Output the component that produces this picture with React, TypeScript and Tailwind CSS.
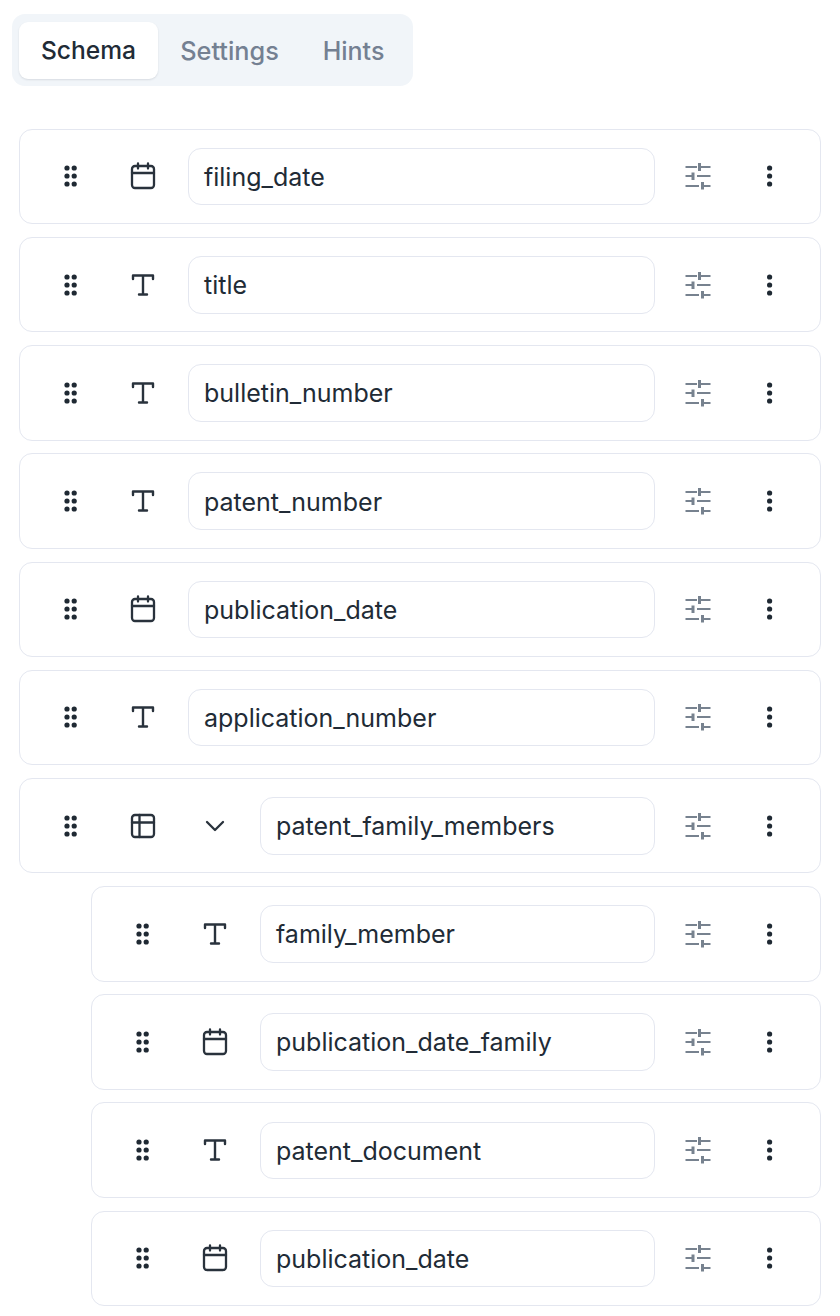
import React from "react"

type FieldType = "date" | "text" | "table"

type Field = {
  name: string
  type: FieldType
  nested?: boolean
  expandable?: boolean
}

const fields: Field[] = [
  { name: "filing_date", type: "date" },
  { name: "title", type: "text" },
  { name: "bulletin_number", type: "text" },
  { name: "patent_number", type: "text" },
  { name: "publication_date", type: "date" },
  { name: "application_number", type: "text" },
  { name: "patent_family_members", type: "table", expandable: true },
  { name: "family_member", type: "text", nested: true },
  { name: "publication_date_family", type: "date", nested: true },
  { name: "patent_document", type: "text", nested: true },
  { name: "publication_date", type: "date", nested: true },
]

const GripIcon = () => (
  <svg width="16" height="24" viewBox="0 0 16 24" fill="#1f2933">
    <circle cx="4" cy="4" r="2.6" />
    <circle cx="11.2" cy="4" r="2.6" />
    <circle cx="4" cy="12" r="2.6" />
    <circle cx="11.2" cy="12" r="2.6" />
    <circle cx="4" cy="20" r="2.6" />
    <circle cx="11.2" cy="20" r="2.6" />
  </svg>
)

const CalendarIcon = () => (
  <svg width="26" height="28" viewBox="0 0 26 28" fill="none" stroke="#29323c" strokeWidth="2.3" strokeLinecap="round" strokeLinejoin="round">
    <rect x="2" y="4" width="22" height="22" rx="3" />
    <path d="M2 11h22M8 1.5v5M18 1.5v5" />
  </svg>
)

const TextIcon = () => (
  <svg width="24" height="24" viewBox="0 0 24 24" fill="none" stroke="#29323c" strokeWidth="2.4" strokeLinecap="round" strokeLinejoin="round">
    <path d="M2 6V2.5h20V6M12 2.5v19M8 21.5h8" />
  </svg>
)

const TableIcon = () => (
  <svg width="26" height="26" viewBox="0 0 26 26" fill="none" stroke="#29323c" strokeWidth="2.3" strokeLinecap="round" strokeLinejoin="round">
    <rect x="2" y="2" width="22" height="22" rx="3" />
    <path d="M2 9.5h22M9.5 2v22" />
  </svg>
)

const ChevronIcon = () => (
  <svg width="20" height="12" viewBox="0 0 20 12" fill="none" stroke="#29323c" strokeWidth="2.3" strokeLinecap="round" strokeLinejoin="round">
    <path d="M2 2l8 8 8-8" />
  </svg>
)

const SlidersIcon = () => (
  <svg width="26" height="28" viewBox="0 0 26 28" fill="none" stroke="#77828f" strokeWidth="2.2">
    <path d="M0.5 5h11.5M15 5h10.5" />
    <path d="M14.5 1v8" strokeWidth="3" />
    <path d="M0.5 14h7M12 14h13.5" />
    <path d="M8 10.5v7.5" strokeWidth="3" />
    <path d="M0.5 24h13.5M18 24h7.5" />
    <path d="M17.5 20v7.5" strokeWidth="3" />
  </svg>
)

const MoreIcon = () => (
  <svg width="8" height="24" viewBox="0 0 8 24" fill="#1f2933">
    <circle cx="3.6" cy="4" r="2.6" />
    <circle cx="3.6" cy="12" r="2.6" />
    <circle cx="3.6" cy="20" r="2.6" />
  </svg>
)

const typeIcons = {
  date: <CalendarIcon />,
  text: <TextIcon />,
  table: <TableIcon />,
}

const FieldRow = ({ field }: { field: Field }) => (
  <div
    className={`h-[95.4px] flex items-center pr-[21px] rounded-[13px] border border-[#e4e7f0] bg-white ${
      field.nested ? "ml-[72px]" : ""
    }`}
  >
    <div className="w-[101px] shrink-0 flex justify-center">
      <GripIcon />
    </div>
    <div className="w-[44px] shrink-0 flex justify-center">{typeIcons[field.type]}</div>
    {field.expandable && (
      <div className="w-[72px] shrink-0 flex justify-center pl-[28px]">
        <ChevronIcon />
      </div>
    )}
    <div className="flex-1 h-[57.6px] mt-[0.4px] ml-[23px] flex items-center rounded-[13px] border border-[#e4e7f0] pt-[2px] px-[15px] text-[25px] text-[#212b36]">
      {field.name}
    </div>
    <div className="w-[85px] shrink-0 flex justify-center">
      <SlidersIcon />
    </div>
    <div className="w-[59px] shrink-0 flex justify-center">
      <MoreIcon />
    </div>
  </div>
)

export default function App() {
  return (
    <div className="w-[840px] h-[1316px] bg-white font-['Inter',sans-serif] overflow-hidden">
      <div className="pt-[14px] pl-[12px]">
        <div className="w-[401px] h-[72px] flex items-center p-[7px] rounded-[13px] bg-[#f1f5f9] font-medium">
          <div className="w-[139px] h-[57px] pt-[1px] flex items-center justify-center rounded-[9px] bg-white text-[24.6px] text-[#212b36] shadow-[0_1px_2px_rgba(30,41,59,0.12)]">
            Schema
          </div>
          <div className="w-[143px] pt-[2px] text-center text-[25.3px] text-[#748092]">Settings</div>
          <div className="flex-1 pt-[3px] text-center text-[25px] text-[#748092]">Hints</div>
        </div>
      </div>
      <div className="mt-[42.8px] ml-[19px] mr-[19px] flex flex-col gap-[12.8px]">
        {fields.map((field, i) => (
          <FieldRow key={i} field={field} />
        ))}
      </div>
    </div>
  )
}
